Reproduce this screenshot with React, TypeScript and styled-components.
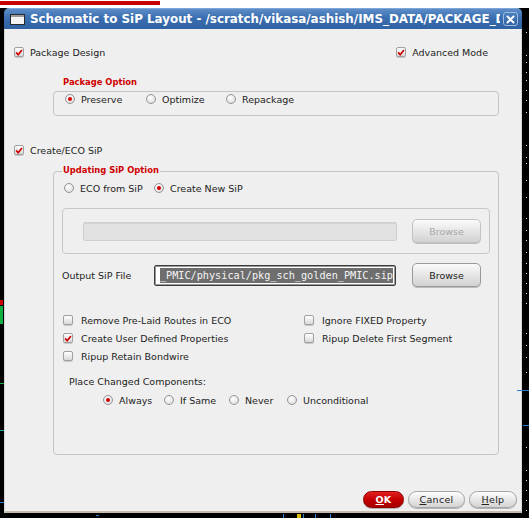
import React from "react";
import styled, { createGlobalStyle } from "styled-components";

const GlobalStyle = createGlobalStyle`
  html, body {
    margin: 0;
    padding: 0;
    background: #000;
  }
  body {
    font-family: "DejaVu Sans", "Liberation Sans", sans-serif;
    color: #222;
  }
`;

type CheckProps = { label: string; checked?: boolean; gap?: number };
type RadioProps = { label: string; on?: boolean; width?: number };

const Screen = styled.div`
  position: relative;
  width: 529px;
  height: 518px;
  background: #000;
  overflow: hidden;
  display: flex;
  flex-direction: column;
`;

const TopStrip = styled.div`
  flex: none;
  height: 8px;
  padding-top: 1px;
  box-sizing: border-box;
  background: #fff;
`;

const RedBar = styled.div`
  width: 160px;
  height: 4px;
  background: #c80000;
`;

const Window = styled.div`
  flex: none;
  margin-left: 4px;
  width: 518px;
  height: 505px;
  display: flex;
  flex-direction: column;
  border-radius: 5px 5px 0 0;
  overflow: hidden;
`;

const TitleBar = styled.div`
  flex: none;
  height: 21px;
  display: flex;
  align-items: center;
  padding: 0 4px 0 6px;
  box-sizing: border-box;
  background: linear-gradient(#5d8dc8, #3a6eb0 45%, #2f62a3);
  border-top: 1px solid #7ea6d8;
`;

const TitleText = styled.div`
  flex: 1;
  min-width: 0;
  margin-left: 5px;
  overflow: hidden;
  white-space: nowrap;
  color: #fff;
  font-weight: bold;
  font-size: 11.9px;
`;

const CloseButton = styled.div`
  flex: none;
  width: 15px;
  height: 14px;
  margin-left: 3px;
  box-sizing: border-box;
  border: 1px solid #9dbbe0;
  border-radius: 3px;
  background: linear-gradient(#4c7fc0, #2f63a4);
  display: flex;
  align-items: center;
  justify-content: center;
`;

const Body = styled.div`
  flex: 1;
  display: flex;
  flex-direction: column;
  background: #efefef;
  border-left: 1px solid #d6d6d6;
  border-right: 1px solid #d6d6d6;
  border-bottom: 2px solid #c7bca9;
`;

const TopRow = styled.div`
  height: 14px;
  margin-top: 16px;
  padding: 0 33px 0 9px;
  display: flex;
  align-items: center;
  justify-content: space-between;
`;

const SectionRow = styled.div<{ $top: number }>`
  height: 14px;
  margin-top: ${(p) => p.$top}px;
  padding-left: 9px;
  display: flex;
  align-items: center;
`;

const Group = styled.div<{ $top: number; $height: number }>`
  position: relative;
  margin: ${(p) => p.$top}px 0 0 48px;
  width: 446px;
  height: ${(p) => p.$height}px;
  box-sizing: border-box;
  border: 1px solid #c4c4c4;
  border-radius: 4px;
  padding-left: 8px;
  display: flex;
  flex-direction: column;
`;

const GroupLabel = styled.div<{ $top: number }>`
  position: absolute;
  left: 8px;
  top: ${(p) => p.$top}px;
  padding: 0 1px;
  background: #efefef;
  color: #d00000;
  font-weight: bold;
  font-size: 8.4px;
  line-height: 13px;
`;

const OptionRow = styled.div<{ $top: number; $left: number }>`
  height: 14px;
  margin: ${(p) => p.$top}px 0 0 ${(p) => p.$left}px;
  display: flex;
  align-items: center;
`;

const CheckItem = styled.label<{ $gap: number }>`
  display: inline-flex;
  align-items: center;
  gap: ${(p) => p.$gap}px;
  font-size: 9.5px;
  white-space: nowrap;
`;

const CheckBox = styled.span`
  flex: none;
  width: 10px;
  height: 10px;
  box-sizing: border-box;
  border: 1px solid #a0a0a0;
  border-radius: 2px;
  background: linear-gradient(#ffffff, #d9d9d9);
  box-shadow: 0 1px 0 #c8c8c8;
  display: inline-flex;
  align-items: center;
  justify-content: center;
`;

const RadioItem = styled.label<{ $width?: number }>`
  display: inline-flex;
  align-items: center;
  gap: 6px;
  width: ${(p) => (p.$width ? `${p.$width}px` : "auto")};
  font-size: 9.5px;
  white-space: nowrap;
`;

const RadioDot = styled.span<{ $on: boolean }>`
  flex: none;
  width: 10px;
  height: 10px;
  box-sizing: border-box;
  border: 1px solid #959595;
  border-radius: 50%;
  background: radial-gradient(circle at 40% 35%, #ffffff, #d6d6d6);
  display: inline-flex;
  align-items: center;
  justify-content: center;

  &::after {
    content: "";
    width: 4px;
    height: 4px;
    border-radius: 50%;
    background: ${(p) => (p.$on ? "#d40000" : "transparent")};
  }
`;

const InnerBox = styled.div`
  margin-top: 13px;
  width: 428px;
  height: 46px;
  box-sizing: border-box;
  border: 1px solid #c8c8c8;
  border-radius: 4px;
  padding: 0 8px 0 20px;
  display: flex;
  align-items: center;
  gap: 15px;
`;

const FileField = styled.div<{ $disabled?: boolean; $width: number; $height: number }>`
  flex: none;
  width: ${(p) => p.$width}px;
  height: ${(p) => p.$height}px;
  box-sizing: border-box;
  border: 1px solid ${(p) => (p.$disabled ? "#cfcfcf" : "#3c3c3c")};
  border-radius: 2px;
  background: ${(p) => (p.$disabled ? "#e2e2e2" : "#ffffff")};
  box-shadow: ${(p) => (p.$disabled ? "inset 0 1px 0 #d4d4d4" : "inset 0 0 0 1px #9a9a9a")};
  padding: 1px 2px;
  display: flex;
  justify-content: flex-end;
  align-items: center;
  overflow: hidden;
`;

const Selected = styled.span`
  flex: none;
  white-space: nowrap;
  font-family: "DejaVu Sans Mono", "Liberation Mono", monospace;
  font-size: 10.2px;
  line-height: 15px;
  background: #6e6e6e;
  color: #f4f4f4;
`;

const Browse = styled.button<{ $disabled?: boolean }>`
  flex: none;
  width: 69px;
  height: 24px;
  box-sizing: border-box;
  border: 1px solid ${(p) => (p.$disabled ? "#c2c2c2" : "#9a9a9a")};
  border-radius: 5px;
  background: linear-gradient(#fbfbfb, #e6e6e6 50%, #d2d2d2);
  box-shadow: 0 1px 0 #bdbdbd;
  font-family: inherit;
  font-size: 9.5px;
  color: ${(p) => (p.$disabled ? "#a8a8a8" : "#222")};
  padding: 0;
`;

const OutputRow = styled.div`
  margin-top: 9px;
  height: 24px;
  display: flex;
  align-items: center;
`;

const FieldLabel = styled.span`
  width: 92px;
  flex: none;
  font-size: 9.5px;
  white-space: nowrap;
`;

const Spacer = styled.span`
  width: 16px;
  flex: none;
`;

const OptionsGrid = styled.div`
  margin: 24px 0 0 1px;
  display: grid;
  grid-template-columns: 241px auto;
  grid-auto-rows: 18px;
  align-items: center;
`;

const PlainLabel = styled.div`
  margin: 10px 0 0 7px;
  height: 14px;
  line-height: 14px;
  font-size: 9.5px;
`;

const Footer = styled.div`
  margin-top: auto;
  padding: 0 4px 3px 0;
  display: flex;
  justify-content: flex-end;
  gap: 4px;
`;

const DialogButton = styled.button<{ $primary?: boolean; $width: number }>`
  width: ${(p) => p.$width}px;
  height: 17px;
  box-sizing: border-box;
  padding: 0;
  border-radius: 9px;
  border: 1px solid ${(p) => (p.$primary ? "#8c0000" : "#a5a5a5")};
  background: ${(p) =>
    p.$primary
      ? "linear-gradient(#e22020, #c40000 50%, #a80000)"
      : "linear-gradient(#fdfdfd, #e8e8e8 50%, #d4d4d4)"};
  box-shadow: 0 1px 0 #b5b5b5;
  color: ${(p) => (p.$primary ? "#fff" : "#222")};
  font-family: inherit;
  font-weight: ${(p) => (p.$primary ? "bold" : "normal")};
  font-size: 9.5px;
  letter-spacing: 0.3px;
`;

const Speck = styled.div<{ $color: string }>`
  position: absolute;
  background: ${(p) => p.$color};
`;

const Check = ({ label, checked, gap = 8 }: CheckProps) => (
  <CheckItem $gap={gap}>
    <CheckBox>
      {checked && (
        <svg width="9" height="9" viewBox="0 0 9 9">
          <path d="M1.3 4.4 L3.6 7 L7.8 1.6" fill="none" stroke="#d00000" strokeWidth="1.9" />
        </svg>
      )}
    </CheckBox>
    {label}
  </CheckItem>
);

const Radio = ({ label, on = false, width }: RadioProps) => (
  <RadioItem $width={width}>
    <RadioDot $on={on} />
    {label}
  </RadioItem>
);

const WindowIcon = () => (
  <svg width="15" height="11" viewBox="0 0 15 11">
    <rect x="0.5" y="0.5" width="14" height="10" fill="#f4f4f4" stroke="#2a2a2a" />
    <rect x="1" y="1" width="13" height="2" fill="#9a9a9a" />
  </svg>
);

const CloseIcon = () => (
  <svg width="9" height="9" viewBox="0 0 9 9">
    <path d="M1.5 1.5 L7.5 7.5 M7.5 1.5 L1.5 7.5" stroke="#fff" strokeWidth="2" strokeLinecap="round" />
  </svg>
);

const dotsRight = [32, 55, 62, 72, 80, 90, 100, 112, 145, 157, 163, 180, 197, 218, 230, 240, 252, 263, 273, 283, 293, 303, 333, 345, 357, 372, 447, 470, 480, 490, 500, 510];

const specks: { x: number; y: number; w: number; h: number; c: string }[] = [
  { x: 517, y: 390, w: 12, h: 1, c: "#2a7fd0" },
  { x: 523, y: 425, w: 6, h: 1, c: "#2a7fd0" },
  { x: 0, y: 300, w: 3, h: 5, c: "#d00000" },
  { x: 0, y: 306, w: 3, h: 18, c: "#10b040" },
  { x: 0, y: 383, w: 4, h: 1, c: "#10b040" },
  { x: 0, y: 430, w: 4, h: 1, c: "#1aa0a0" },
  { x: 0, y: 502, w: 4, h: 1, c: "#2a7fd0" },
  { x: 96, y: 515, w: 3, h: 1, c: "#2a7fd0" },
  { x: 283, y: 514, w: 1, h: 4, c: "#2a7fd0" },
  { x: 297, y: 514, w: 4, h: 4, c: "#d8c000" },
  { x: 303, y: 514, w: 1, h: 4, c: "#2a7fd0" },
  { x: 315, y: 514, w: 1, h: 4, c: "#2a7fd0" },
  { x: 330, y: 514, w: 1, h: 4, c: "#2a7fd0" },
];

export default function App() {
  return (
    <>
      <GlobalStyle />
      <Screen>
        <TopStrip>
          <RedBar />
        </TopStrip>
        <Window>
          <TitleBar>
            <WindowIcon />
            <TitleText>Schematic to SiP Layout - /scratch/vikasa/ashish/IMS_DATA/PACKAGE_DESIGN</TitleText>
            <CloseButton>
              <CloseIcon />
            </CloseButton>
          </TitleBar>
          <Body>
            <TopRow>
              <Check label="Package Design" checked gap={6} />
              <Check label="Advanced Mode" checked gap={6} />
            </TopRow>

            <Group $top={32} $height={25}>
              <GroupLabel $top={-16}>Package Option</GroupLabel>
              <OptionRow $top={0} $left={3}>
                <Radio label="Preserve" on width={81} />
                <Radio label="Optimize" width={80} />
                <Radio label="Repackage" />
              </OptionRow>
            </Group>

            <SectionRow $top={27}>
              <Check label="Create/ECO SiP" checked gap={6} />
            </SectionRow>

            <Group $top={14} $height={284}>
              <GroupLabel $top={-8}>Updating SiP Option</GroupLabel>
              <OptionRow $top={9} $left={2}>
                <Radio label="ECO from SiP" width={90} />
                <Radio label="Create New SiP" on />
              </OptionRow>

              <InnerBox>
                <FileField $disabled $width={314} $height={19} />
                <Browse $disabled>Browse</Browse>
              </InnerBox>

              <OutputRow>
                <FieldLabel>Output SiP File</FieldLabel>
                <FileField $width={242} $height={21}>
                  <Selected>_PMIC/physical/pkg_sch_golden_PMIC.sip</Selected>
                </FileField>
                <Spacer />
                <Browse>Browse</Browse>
              </OutputRow>

              <OptionsGrid>
                <Check label="Remove Pre-Laid Routes in ECO" />
                <Check label="Ignore FIXED Property" />
                <Check label="Create User Defined Properties" checked />
                <Check label="Ripup Delete First Segment" />
                <Check label="Ripup Retain Bondwire" />
              </OptionsGrid>

              <PlainLabel>Place Changed Components:</PlainLabel>
              <OptionRow $top={4} $left={41}>
                <Radio label="Always" on width={61} />
                <Radio label="If Same" width={65} />
                <Radio label="Never" width={58} />
                <Radio label="Unconditional" />
              </OptionRow>
            </Group>

            <Footer>
              <DialogButton $primary $width={41}>
                <u>O</u>K
              </DialogButton>
              <DialogButton $width={57}>
                <u>C</u>ancel
              </DialogButton>
              <DialogButton $width={48}>
                <u>H</u>elp
              </DialogButton>
            </Footer>
          </Body>
        </Window>
        {dotsRight.map((y) => (
          <Speck key={`d${y}`} $color="#e8e8e8" style={{ left: 526, top: y, width: 1, height: 1 }} />
        ))}
        {specks.map((s, i) => (
          <Speck key={i} $color={s.c} style={{ left: s.x, top: s.y, width: s.w, height: s.h }} />
        ))}
      </Screen>
    </>
  );
}
